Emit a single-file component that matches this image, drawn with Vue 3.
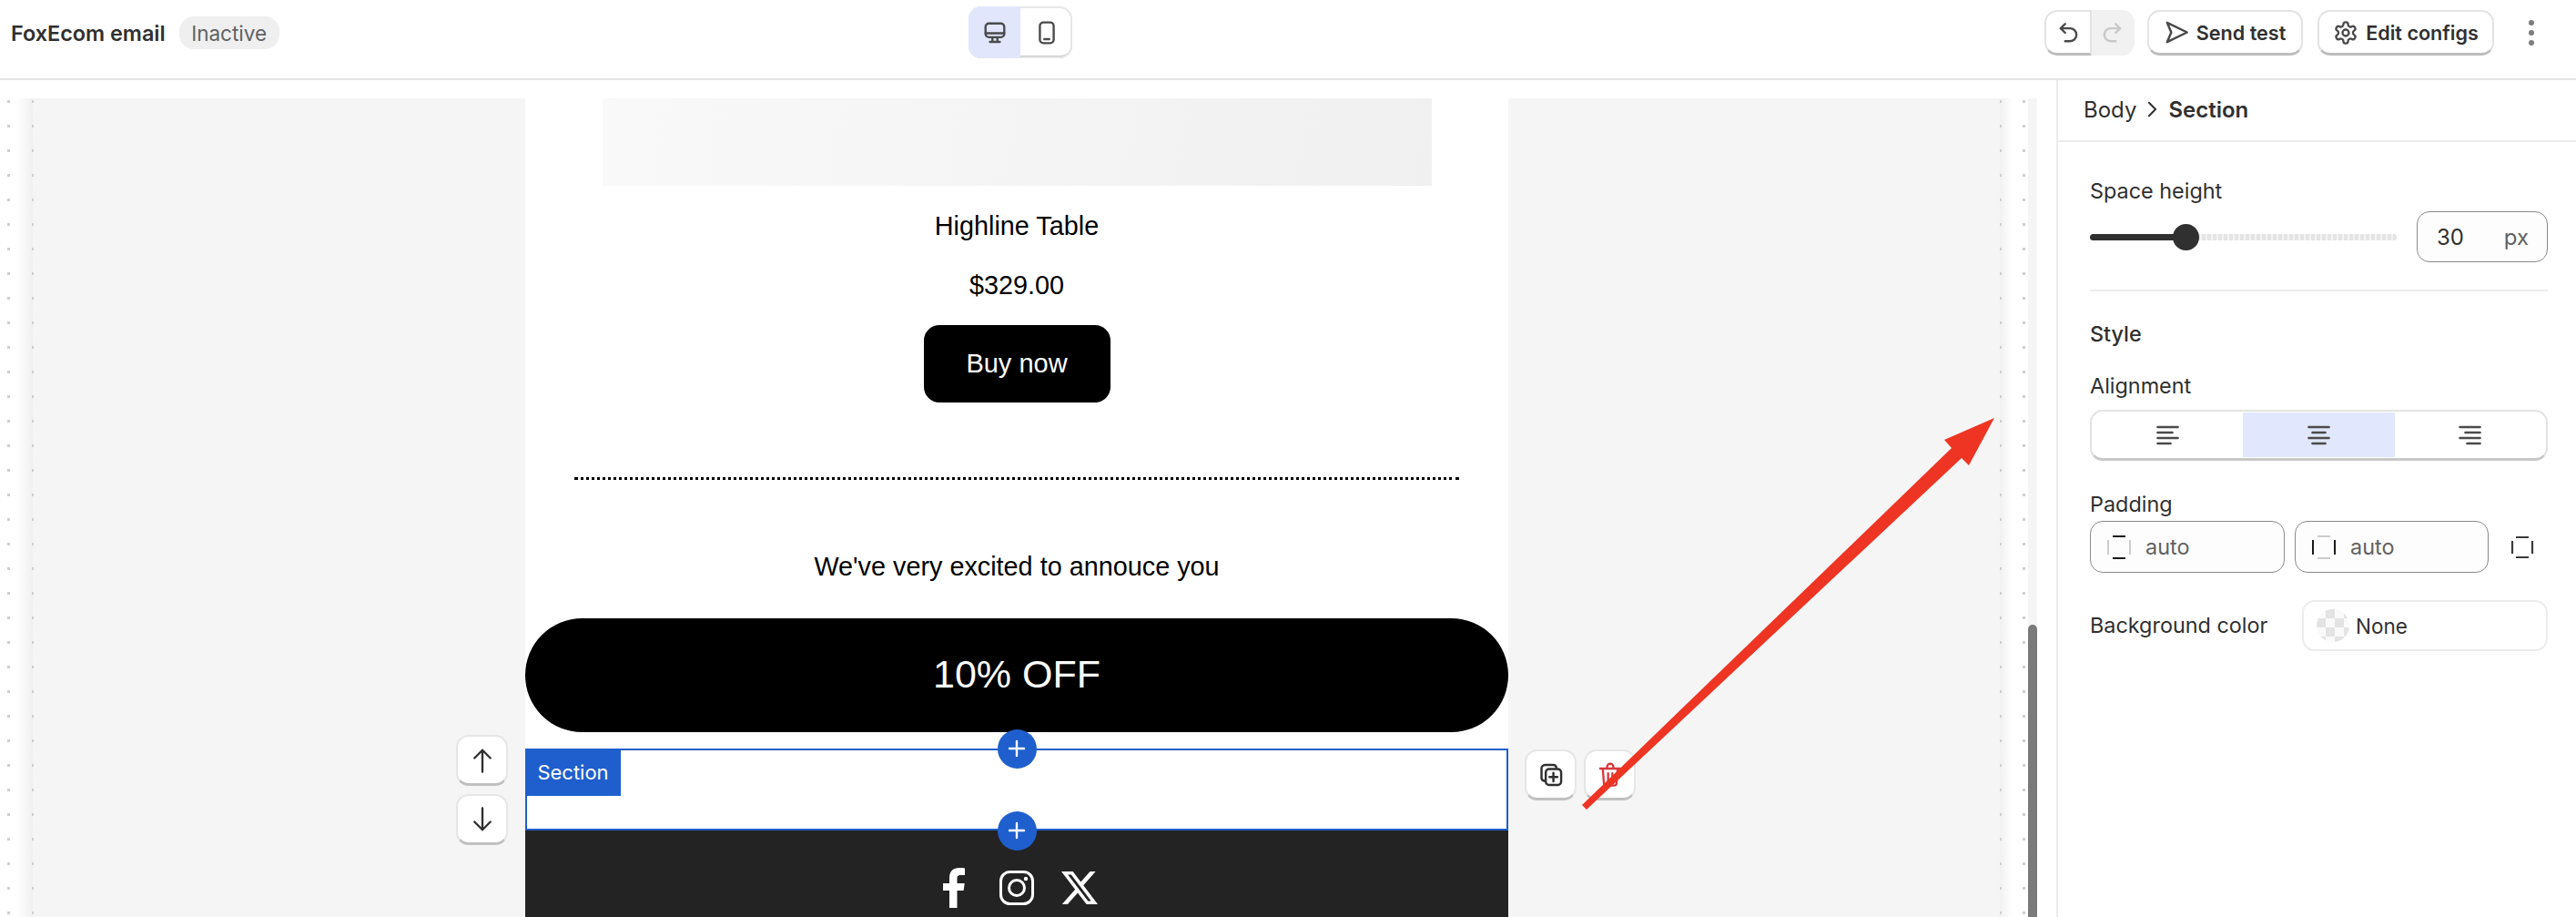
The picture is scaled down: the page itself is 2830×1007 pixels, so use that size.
<script setup>
const alignments = [
  { id: 'left', active: false, lines: [[1, 23], [1, 17], [1, 23], [1, 15]] },
  { id: 'center', active: true, lines: [[1, 23], [5, 19], [1, 23], [5, 19]] },
  { id: 'right', active: false, lines: [[1, 23], [7, 23], [1, 23], [9, 23]] }
]
</script>

<template>
  <div class="page">
    <header class="topbar">
      <div class="title-block">
        <span class="title">FoxEcom email</span>
        <span class="badge">Inactive</span>
      </div>

      <div class="device-toggle">
        <button class="device active">
          <svg viewBox="0 0 24 24" width="26" height="26" fill="none" stroke="#4a4a4a" stroke-width="2.2" stroke-linejoin="round" stroke-linecap="round">
            <rect x="2.5" y="2.5" width="19" height="14" rx="3.5" />
            <path d="M2.5 12.5h19M9.5 17v4M14.5 17v4M7 21.2h10" />
          </svg>
        </button>
        <button class="device">
          <svg viewBox="0 0 24 24" width="26" height="26" fill="none" stroke="#4a4a4a" stroke-width="2.2" stroke-linecap="round">
            <rect x="5" y="1.5" width="14" height="21" rx="3.5" />
            <path d="M9.5 18.5h5" />
          </svg>
        </button>
      </div>

      <div class="actions">
        <div class="history">
          <button class="history-btn">
            <svg viewBox="0 0 24 24" width="26" height="26" fill="none" stroke="#4a4a4a" stroke-width="2.2" stroke-linecap="round" stroke-linejoin="round">
              <path d="M9 3 4.5 7.5 9 12" />
              <path d="M4.5 7.5H14a6.5 6.5 0 0 1 0 13H9" />
            </svg>
          </button>
          <button class="history-btn off">
            <svg viewBox="0 0 24 24" width="26" height="26" fill="none" stroke="#c9c9c9" stroke-width="2.2" stroke-linecap="round" stroke-linejoin="round">
              <path d="M15 3l4.5 4.5L15 12" />
              <path d="M19.5 7.5H10a6.5 6.5 0 0 0 0 13h5" />
            </svg>
          </button>
        </div>
        <button class="tool send">
          <svg viewBox="0 0 24 24" width="27" height="27" fill="none" stroke="#4a4a4a" stroke-width="2.2" stroke-linejoin="round" stroke-linecap="round">
            <path d="M2.5 2.5 22 12 2.5 21.5 6.5 12z" />
          </svg>
          Send test
        </button>
        <button class="tool configs">
          <svg viewBox="0 0 24 24" width="28" height="28" fill="none" stroke="#4a4a4a" stroke-width="2" stroke-linejoin="round">
            <path d="M12.22 2h-.44a2 2 0 0 0-2 2v.18a2 2 0 0 1-1 1.73l-.43.25a2 2 0 0 1-2 0l-.15-.08a2 2 0 0 0-2.73.73l-.22.38a2 2 0 0 0 .73 2.73l.15.1a2 2 0 0 1 1 1.72v.51a2 2 0 0 1-1 1.74l-.15.09a2 2 0 0 0-.73 2.73l.22.38a2 2 0 0 0 2.73.73l.15-.08a2 2 0 0 1 2 0l.43.25a2 2 0 0 1 1 1.73V20a2 2 0 0 0 2 2h.44a2 2 0 0 0 2-2v-.18a2 2 0 0 1 1-1.73l.43-.25a2 2 0 0 1 2 0l.15.08a2 2 0 0 0 2.73-.73l.22-.39a2 2 0 0 0-.73-2.73l-.15-.08a2 2 0 0 1-1-1.74v-.5a2 2 0 0 1 1-1.74l.15-.09a2 2 0 0 0 .73-2.73l-.22-.38a2 2 0 0 0-2.73-.73l-.15.08a2 2 0 0 1-2 0l-.43-.25a2 2 0 0 1-1-1.73V4a2 2 0 0 0-2-2z" />
            <circle cx="12" cy="12" r="3" />
          </svg>
          Edit configs
        </button>
        <div class="more"><i></i><i></i><i></i></div>
      </div>
    </header>

    <div class="workspace">
      <div class="gutter gutter-left">
        <span class="rule square rule-a"></span>
        <span class="rule thin rule-b"></span>
      </div>

      <main class="canvas">
        <div class="email">
          <div class="product-image"></div>
          <div class="product-name">Highline Table</div>
          <div class="product-price">$329.00</div>
          <button class="buy">Buy now</button>
          <div class="dotted"></div>
          <div class="message">We've very excited to annouce you</div>
          <div class="pill">10% OFF</div>

          <section class="selected">
            <span class="section-tag">Section</span>
            <button class="add add-top">
              <svg viewBox="0 0 24 24" width="24" height="24" fill="none" stroke="#fff" stroke-width="2.4" stroke-linecap="round"><path d="M12 4v16M4 12h16" /></svg>
            </button>
            <button class="add add-bottom">
              <svg viewBox="0 0 24 24" width="24" height="24" fill="none" stroke="#fff" stroke-width="2.4" stroke-linecap="round"><path d="M12 4v16M4 12h16" /></svg>
            </button>
            <div class="move-tools">
              <button class="float-btn">
                <svg viewBox="0 0 24 24" width="30" height="30" fill="none" stroke="#303030" stroke-width="1.9" stroke-linecap="round" stroke-linejoin="round"><path d="M12 22V3M5 10l7-7 7 7" /></svg>
              </button>
              <button class="float-btn">
                <svg viewBox="0 0 24 24" width="30" height="30" fill="none" stroke="#303030" stroke-width="1.9" stroke-linecap="round" stroke-linejoin="round"><path d="M12 2v19M5 14l7 7 7-7" /></svg>
              </button>
            </div>
            <div class="edit-tools">
              <button class="float-btn">
                <svg viewBox="0 0 24 24" width="28" height="28" fill="none" stroke="#303030" stroke-width="2.1" stroke-linecap="round" stroke-linejoin="round">
                  <path d="M6 17.5A3 3 0 0 1 3 15V6a3.5 3.5 0 0 1 3.5-3.5H14A3 3 0 0 1 17 5" />
                  <rect x="7" y="6.5" width="14.5" height="15" rx="3.2" />
                  <path d="M14.2 10v8M10.5 14h7.4" />
                </svg>
              </button>
              <button class="float-btn">
                <svg viewBox="0 0 24 24" width="28" height="28" fill="none" stroke="#d9363e" stroke-width="2" stroke-linecap="round" stroke-linejoin="round">
                  <path d="M2.5 6h19M9 6V4.5a3 3 0 0 1 6 0V6M5 6l1 13.5a2.5 2.5 0 0 0 2.500 2.500h7a2.500 2.500 0 0 0 2.500-2.500L19 6M10 10.500v7.500M14 10.500v7.500" />
                </svg>
              </button>
            </div>
          </section>

          <footer class="socials">
            <span class="social">
              <svg viewBox="0 0 24 44" width="24" height="44"><path fill="#fff" d="M7 44V25H0v-8h7v-6C7 3.800 11.300 0 17.600 0c2.900 0 5.400.2 6.400.4v7.500h-4.400c-3.400 0-4.100 1.600-4.100 4V17h8.200l-1.100 8h-7.100v19z" /></svg>
            </span>
            <span class="social">
              <svg viewBox="0 0 38 38" width="38" height="38" fill="none" stroke="#fff" stroke-width="3">
                <rect x="1.5" y="1.5" width="35" height="35" rx="10" />
                <circle cx="19" cy="19" r="8.5" />
                <circle cx="29" cy="9" r="2.2" fill="#fff" stroke="none" />
              </svg>
            </span>
            <span class="social">
              <svg viewBox="0 0 24 24" width="40" height="40"><path fill="#fff" d="M18.900 1.150h3.680l-8.040 9.190L24 22.850h-7.410l-5.800-7.580-6.640 7.580H.47l8.600-9.830L0 1.150h7.590l5.240 6.930zM17.610 20.640h2.040L6.490 3.240H4.300z" /></svg>
            </span>
          </footer>
        </div>
      </main>

      <div class="gutter gutter-right">
        <span class="rule thin rule-c"></span>
        <span class="rule square rule-d"></span>
      </div>
      <div class="scrollbar"><div class="scroll-thumb"></div></div>

      <aside class="panel">
        <div class="breadcrumb">
          <span>Body</span>
          <svg viewBox="0 0 12 20" width="11" height="18" fill="none" stroke="#303030" stroke-width="2.2" stroke-linecap="round" stroke-linejoin="round"><path d="M2 2l8 8-8 8" /></svg>
          <strong>Section</strong>
        </div>

        <div class="panel-body">
          <label class="field-label first">Space height</label>
          <div class="slider-row">
            <div class="slider">
              <div class="slider-rail"></div>
              <div class="slider-fill"></div>
              <div class="slider-thumb"></div>
            </div>
            <div class="number-input">
              <span class="num">30</span>
              <span class="unit">px</span>
            </div>
          </div>

          <div class="divider"></div>

          <h3 class="style-title">Style</h3>

          <label class="field-label align-label">Alignment</label>
          <div class="segments">
            <div v-for="a in alignments" :key="a.id" class="segment" :class="{ active: a.active }">
              <svg viewBox="0 0 24 22" width="27" height="22" stroke="#4a4a4a" stroke-width="2.6" stroke-linecap="round">
                <line v-for="(l, i) in a.lines" :key="i" :x1="l[0]" :x2="l[1]" :y1="2 + i * 6" :y2="2 + i * 6" />
              </svg>
            </div>
          </div>

          <label class="field-label padding-label">Padding</label>
          <div class="padding-row">
            <div class="pad-input first-pad">
              <svg viewBox="0 0 26 26" width="26" height="26" fill="none" stroke-width="2">
                <path d="M6 1h14M6 25h14" stroke="#1a1a1a" />
                <path d="M1 5v16M25 5v16" stroke="#cccccc" />
              </svg>
              <span>auto</span>
            </div>
            <div class="pad-input">
              <svg viewBox="0 0 26 26" width="26" height="26" fill="none" stroke-width="2">
                <path d="M6 1h14M6 25h14" stroke="#cccccc" />
                <path d="M1 5v16M25 5v16" stroke="#1a1a1a" />
              </svg>
              <span>auto</span>
            </div>
            <svg class="pad-link" viewBox="0 0 26 26" width="26" height="26" fill="none" stroke="#3a3a3a" stroke-width="2.2">
              <path d="M6 2h14M6 24h14M2 6v14M24 6v14" />
            </svg>
          </div>

          <div class="bg-row">
            <label class="field-label">Background color</label>
            <div class="color-box">
              <span class="swatch"></span>
              <span class="none">None</span>
            </div>
          </div>
        </div>
      </aside>
    </div>

    <svg class="arrow" viewBox="0 0 2830 1007" width="2830" height="1007">
      <polygon fill="#ee3524" points="2191,459 2136,483 2144,492 1738,884 1743,889 2155,503 2163,511" />
    </svg>
  </div>
</template>

<style scoped>
.page {
  position: relative;
  width: 2830px;
  height: 1007px;
  overflow: hidden;
  background: #fff;
  font-family: Inter, "Noto Sans", sans-serif;
  color: #303030;
}

button {
  font-family: inherit;
  padding: 0;
  cursor: pointer;
}

/* top bar */
.topbar {
  display: flex;
  align-items: center;
  height: 86px;
  box-sizing: content-box;
  border-bottom: 2px solid #e6e6e6;
}

.title-block {
  flex: 0 0 1064px;
  display: flex;
  align-items: center;
  padding-left: 12px;
  box-sizing: border-box;
  margin-bottom: 14px;
}

.title {
  font-size: 23.4px;
  font-weight: 600;
}

.badge {
  margin-left: 15px;
  width: 110px;
  height: 36px;
  border-radius: 16px;
  background: #efefef;
  color: #616161;
  font-size: 22.5px;
  display: flex;
  align-items: center;
  justify-content: center;
}

.device-toggle {
  display: flex;
  width: 114px;
  height: 57px;
  margin-bottom: 15px;
  border-radius: 14px;
  overflow: hidden;
  box-shadow: inset 0 0 0 2px #e6e6e6, inset 0 -3px 0 #c8c8c8;
}

.device {
  flex: 1;
  display: flex;
  align-items: center;
  justify-content: center;
  border: 0;
  background: transparent;
}

.device.active {
  background: #e1e6fc;
}

.actions {
  margin-left: auto;
  margin-bottom: 14px;
  display: flex;
  align-items: center;
  padding-right: 36px;
}

.history {
  display: flex;
  width: 99px;
  height: 50px;
  border-radius: 14px;
  overflow: hidden;
}

.history-btn {
  flex: 1;
  display: flex;
  align-items: center;
  justify-content: center;
  border: 2px solid #e3e3e3;
  border-bottom: 3px solid #bdbdbd;
  border-radius: 14px 0 0 14px;
  background: #fff;
}

.history-btn.off {
  border: 0;
  border-radius: 0;
  background: #f1f1f1;
}

.tool {
  display: flex;
  align-items: center;
  justify-content: center;
  gap: 8px;
  height: 50px;
  border: 2px solid #e3e3e3;
  border-bottom: 3px solid #bdbdbd;
  border-radius: 14px;
  background: #fff;
  color: #303030;
  font-size: 21.6px;
  font-weight: 600;
}

.send {
  width: 171px;
  margin-left: 14px;
}

.configs {
  width: 194px;
  margin-left: 16px;
}

.more {
  width: 26px;
  margin-left: 28px;
  display: flex;
  flex-direction: column;
  align-items: center;
  gap: 5px;
}

.more i {
  width: 6px;
  height: 6px;
  border-radius: 50%;
  background: #7d7d7d;
}

/* work area */
.workspace {
  display: flex;
  height: 919px;
  padding-top: 20px;
  box-sizing: border-box;
}

.gutter {
  position: relative;
  flex: none;
}

.gutter-left {
  width: 36px;
  background: linear-gradient(90deg, #fff 50%, #f0f0f0 100%);
}

.gutter-right {
  width: 31px;
  background: linear-gradient(90deg, #f1f1f1 0, #fff 45%);
}

.rule {
  position: absolute;
  top: 0;
  bottom: 0;
  background-image: linear-gradient(#cfcfcf 0 3px, transparent 3px);
  background-size: 100% 27px;
  background-position: 0 2px;
}

.rule.square {
  width: 3px;
}

.rule.thin {
  width: 1.5px;
}

.rule-a {
  left: 8px;
}

.rule-b {
  left: 35px;
}

.rule-c {
  left: 0;
}

.rule-d {
  left: 25px;
}

.canvas {
  flex: 1;
  background: #f5f5f5;
  min-width: 0;
}

.email {
  width: 1080px;
  margin-left: 541px;
  background: #fff;
  display: flex;
  flex-direction: column;
  align-items: center;
  font-family: "Liberation Sans", Arial, sans-serif;
  color: #000;
}

.product-image {
  width: 911px;
  height: 96px;
  background: linear-gradient(100deg, #f9f9f9, #f0f0f0);
}

.product-name,
.product-price,
.message {
  height: 40px;
  line-height: 40px;
  font-size: 28.8px;
}

.product-name {
  margin-top: 24px;
}

.product-price {
  margin-top: 25px;
}

.buy {
  margin-top: 24px;
  width: 205px;
  height: 85px;
  border: 0;
  border-radius: 17px;
  background: #000;
  color: #fff;
  font-family: inherit;
  font-size: 29px;
}

.dotted {
  margin-top: 82px;
  width: 972px;
  border-top: 3px dotted #000;
}

.message {
  margin-top: 75px;
}

.pill {
  margin-top: 37px;
  width: 100%;
  height: 125px;
  box-sizing: border-box;
  padding-bottom: 3px;
  border-radius: 63px;
  background: #000;
  color: #fff;
  font-size: 43px;
  display: flex;
  align-items: center;
  justify-content: center;
}

.selected {
  position: relative;
  margin-top: 18px;
  width: 100%;
  height: 90px;
  box-sizing: border-box;
  border: 2px solid #1f5fcd;
  font-family: Inter, sans-serif;
}

.section-tag {
  position: absolute;
  left: -2px;
  top: -2px;
  width: 105px;
  height: 52px;
  background: #1f5fcd;
  color: #fff;
  font-size: 22px;
  display: flex;
  align-items: center;
  justify-content: center;
}

.add {
  position: absolute;
  left: 50%;
  width: 43px;
  height: 43px;
  margin-left: -21.5px;
  border: 0;
  border-radius: 50%;
  background: #1f5fcd;
  display: flex;
  align-items: center;
  justify-content: center;
  z-index: 2;
}

.add-top {
  top: -23.5px;
}

.add-bottom {
  bottom: -23.5px;
}

.move-tools {
  position: absolute;
  left: -78px;
  top: -17px;
  display: flex;
  flex-direction: column;
  gap: 9px;
}

.edit-tools {
  position: absolute;
  left: 1096px;
  top: -1px;
  display: flex;
  gap: 8px;
}

.float-btn {
  width: 57px;
  height: 56px;
  display: flex;
  align-items: center;
  justify-content: center;
  background: #fff;
  border: 2px solid #e6e6e6;
  border-bottom: 3px solid #c0c0c0;
  border-radius: 14px;
}

.socials {
  width: 100%;
  height: 200px;
  background: #232323;
  display: flex;
  justify-content: center;
  gap: 25px;
  padding-top: 41px;
  box-sizing: border-box;
}

.social {
  width: 44px;
  height: 44px;
  display: flex;
  align-items: center;
  justify-content: center;
}

.scrollbar {
  flex: none;
  width: 10px;
  background: #f5f5f5;
  position: relative;
}

.scroll-thumb {
  position: absolute;
  left: 0;
  right: 0;
  top: 578px;
  bottom: 0;
  border-radius: 5px 5px 0 0;
  background: #7a7a7a;
}

/* right panel */
.panel {
  flex: none;
  width: 571px;
  margin-left: 21px;
  margin-top: -20px;
  border-left: 2px solid #ececec;
  box-sizing: border-box;
  background: #fff;
}

.breadcrumb {
  height: 68px;
  padding: 0 0 2px 28px;
  box-sizing: border-box;
  border-bottom: 2px solid #ececec;
  display: flex;
  align-items: center;
  font-size: 24px;
  gap: 12px;
}

.breadcrumb strong {
  font-weight: 600;
}

.panel-body {
  padding: 0 31px 0 35px;
}

.field-label {
  display: block;
  height: 28px;
  line-height: 28px;
  font-size: 23.4px;
  white-space: nowrap;
}

.field-label.first {
  margin-top: 40px;
}

.slider-row {
  margin-top: 8px;
  display: flex;
  align-items: center;
  gap: 22px;
}

.slider {
  position: relative;
  width: 337px;
  height: 30px;
}

.slider-rail {
  position: absolute;
  left: 105px;
  right: 0;
  top: 11.5px;
  height: 7px;
  background: repeating-linear-gradient(90deg, #e4e4e4 0 4px, #f4f4f4 4px 6px);
  border-radius: 3px;
}

.slider-fill {
  position: absolute;
  left: 0;
  width: 105px;
  top: 11.5px;
  height: 7px;
  border-radius: 4px;
  background: #303030;
}

.slider-thumb {
  position: absolute;
  left: 90.5px;
  top: 0.5px;
  width: 29px;
  height: 29px;
  border-radius: 50%;
  background: #303030;
}

.number-input {
  flex: none;
  width: 144px;
  height: 56px;
  box-sizing: border-box;
  border: 1.5px solid #8a8a8a;
  border-radius: 14px;
  background: #fdfdfd;
  display: flex;
  align-items: center;
  justify-content: space-between;
  padding: 0 20px 0 21px;
  font-size: 24px;
}

.unit {
  color: #616161;
}

.divider {
  margin-top: 30px;
  border-top: 2px solid #ececec;
}

.style-title {
  margin: 33px 0 0;
  height: 28px;
  line-height: 28px;
  font-size: 23.4px;
  font-weight: 500;
}

.align-label {
  margin-top: 29px;
}

.segments {
  margin-top: 12px;
  height: 56px;
  box-sizing: border-box;
  display: flex;
  border: 2px solid #e3e3e3;
  border-bottom: 3px solid #c8c8c8;
  border-radius: 14px;
  padding: 1px 0;
}

.segment {
  flex: 1;
  display: flex;
  align-items: center;
  justify-content: center;
}

.segment.active {
  background: #e1e7fc;
}

.padding-label {
  margin-top: 34px;
}

.padding-row {
  margin-top: 4px;
  display: flex;
  align-items: center;
}

.pad-input {
  width: 213px;
  height: 57px;
  box-sizing: border-box;
  border: 1.5px solid #8a8a8a;
  border-radius: 14px;
  background: #fdfdfd;
  display: flex;
  align-items: center;
  padding-left: 18px;
  gap: 16px;
  color: #616161;
  font-size: 23.4px;
}

.first-pad {
  width: 214px;
  margin-right: 11px;
}

.pad-link {
  margin-left: 24px;
}

.bg-row {
  margin-top: 30px;
  display: flex;
  align-items: center;
  justify-content: space-between;
}

.color-box {
  width: 270px;
  height: 56px;
  box-sizing: border-box;
  border: 2px solid #ececec;
  border-radius: 14px;
  display: flex;
  align-items: center;
  padding-left: 14px;
  gap: 7px;
  font-size: 22.5px;
}

.swatch {
  width: 36px;
  height: 36px;
  border-radius: 50%;
  background: repeating-conic-gradient(#e3e3e3 0 25%, #fafafa 0 50%) 0 0 / 20px 20px;
}

.arrow {
  position: absolute;
  left: 0;
  top: 0;
  pointer-events: none;
}
</style>

<style>
html,
body {
  margin: 0;
  overflow: hidden;
}
</style>
